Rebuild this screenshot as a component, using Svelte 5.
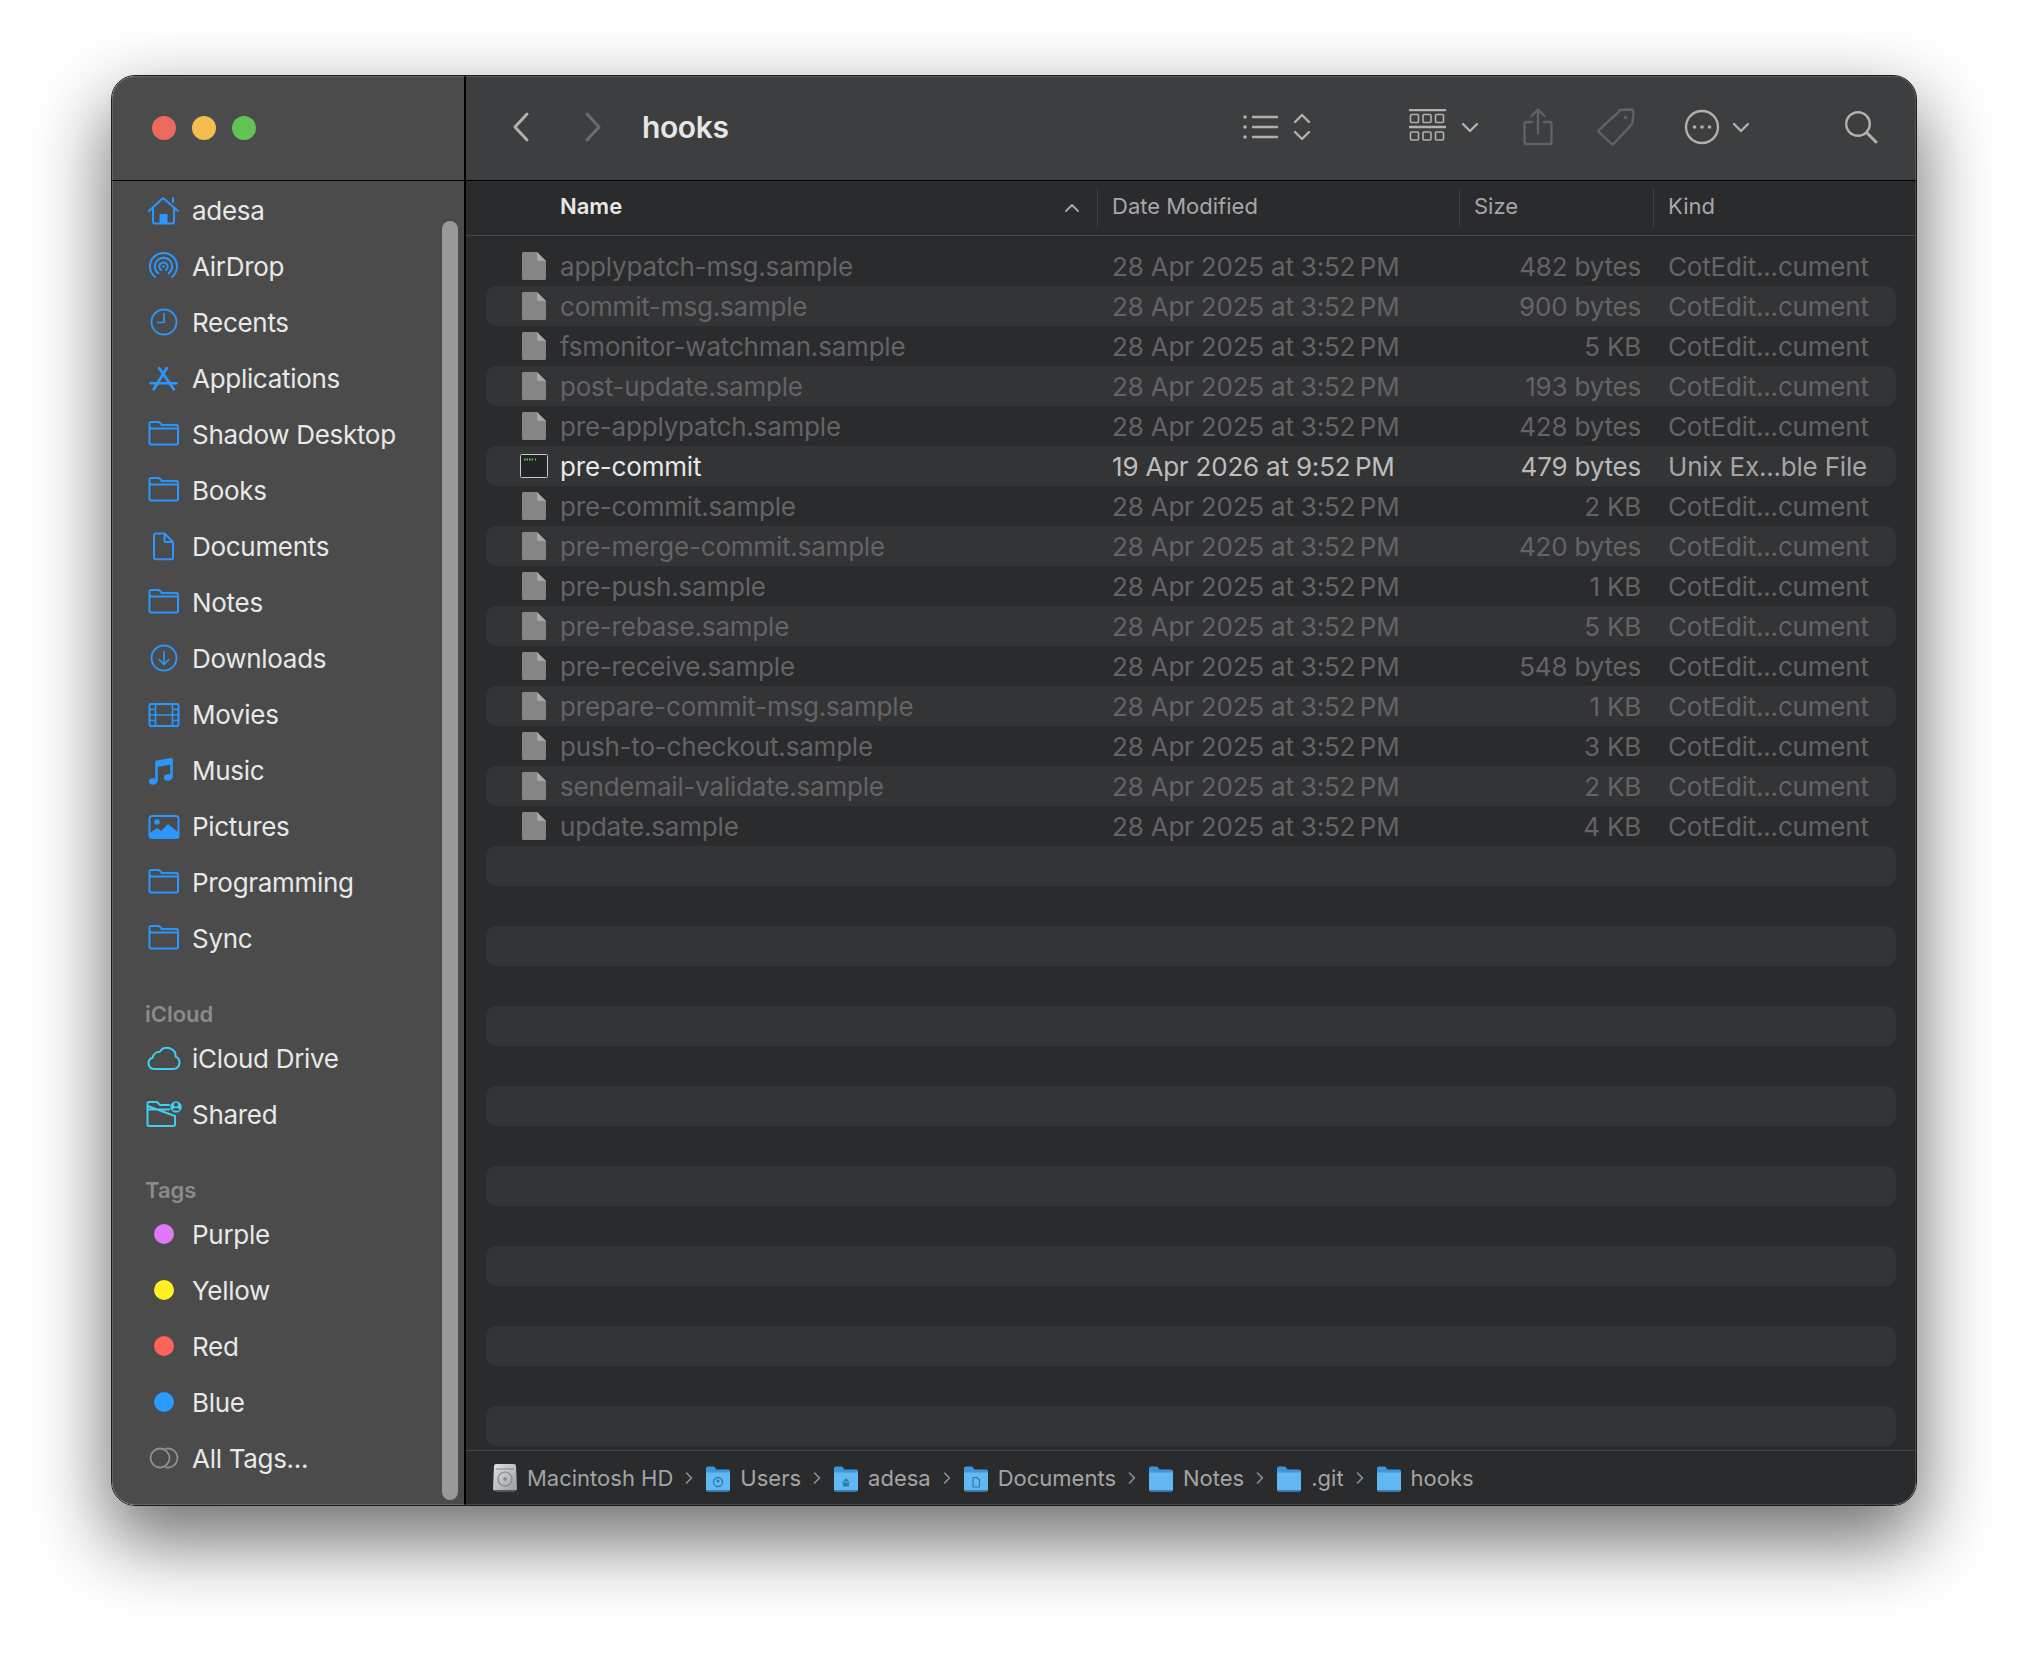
<script lang="ts">
	const date = '28 Apr 2025 at 3:52\u202fPM';
	const kind = 'CotEdit...cument';
	const files = [
		['applypatch-msg.sample', '482 bytes'],
		['commit-msg.sample', '900 bytes'],
		['fsmonitor-watchman.sample', '5 KB'],
		['post-update.sample', '193 bytes'],
		['pre-applypatch.sample', '428 bytes'],
		['pre-commit', '479 bytes'],
		['pre-commit.sample', '2 KB'],
		['pre-merge-commit.sample', '420 bytes'],
		['pre-push.sample', '1 KB'],
		['pre-rebase.sample', '5 KB'],
		['pre-receive.sample', '548 bytes'],
		['prepare-commit-msg.sample', '1 KB'],
		['push-to-checkout.sample', '3 KB'],
		['sendemail-validate.sample', '2 KB'],
		['update.sample', '4 KB']
	];
	const blanks = Array(15).fill(0);

	const places = [
		['adesa', 'home'],
		['AirDrop', 'airdrop'],
		['Recents', 'clock'],
		['Applications', 'apps'],
		['Shadow Desktop', 'folder'],
		['Books', 'folder'],
		['Documents', 'doc'],
		['Notes', 'folder'],
		['Downloads', 'download'],
		['Movies', 'film'],
		['Music', 'music'],
		['Pictures', 'picture'],
		['Programming', 'folder'],
		['Sync', 'folder']
	];
	const tags = [
		['Purple', '#de78f6'],
		['Yellow', '#fff01f'],
		['Red', '#ff6259'],
		['Blue', '#2a9bff']
	];
	const crumbs = [
		['Macintosh HD', 'hd'],
		['Users', 'users'],
		['adesa', 'home'],
		['Documents', 'docs'],
		['Notes', ''],
		['.git', ''],
		['hooks', '']
	];
</script>

{#snippet sideIcon(name)}
	<svg class="side-icon" viewBox="0 0 40 40" fill="none" stroke="currentColor" stroke-width="2" stroke-linecap="round" stroke-linejoin="round">
		{#if name === 'home'}
			<path d="M5 21 19 8l15 13M29 12V8M9 18v13.5a2 2 0 0 0 2 2h17a2 2 0 0 0 2-2V18" />
			<rect x="15.5" y="24" width="8" height="9" fill="currentColor" stroke="none" />
		{:else if name === 'airdrop'}
			<path d="M11.1 31A13.5 13.5 0 1 1 27.9 31M14.3 27.4A8.7 8.7 0 1 1 24.7 27.4M17 24A4.2 4.2 0 1 1 22 24" />
			<circle cx="19.5" cy="20.5" r="1.3" fill="currentColor" stroke="none" />
		{:else if name === 'clock'}
			<circle cx="20" cy="20" r="12.5" stroke-width="1.9" />
			<path d="M20 11.5V20.5H13.5" stroke-width="1.7" />
		{:else if name === 'apps'}
			<path d="M22.7 10.3 9.8 31.3M15.3 10.3 29.8 31.3" stroke-width="2.8" />
			<path d="M6.5 25.3H32.5" stroke-width="2.6" />
		{:else if name === 'folder'}
			<path d="M5.5 11v-1.5A1.5 1.5 0 0 1 7 8h8l3 3h14.5A1.5 1.5 0 0 1 34 12.5v16.5a1.5 1.5 0 0 1-1.5 1.5H7A1.5 1.5 0 0 1 5.5 29ZM5.5 14.5H34" />
		{:else if name === 'doc'}
			<path d="M12 7.5h8.5l8.5 8.5v15.5a1.7 1.7 0 0 1-1.7 1.7H11.7A1.7 1.7 0 0 1 10 31.5V9.5A2 2 0 0 1 12 7.5ZM20.5 7.5v6.7a1.8 1.8 0 0 0 1.8 1.8H29" />
		{:else if name === 'download'}
			<circle cx="20" cy="20" r="12.5" stroke-width="1.9" />
			<path d="M20 13.5V26M15 21.5l5 5 5-5" stroke-width="1.7" />
		{:else if name === 'film'}
			<rect x="5.5" y="10" width="29" height="22" rx="1.5" />
			<path d="M11.5 10V32M28.5 10V32M11.5 21H28.5M5.5 15.5h6M5.5 21h6M5.5 26.5h6M28.5 15.5h6M28.5 21h6M28.5 26.5h6" stroke-width="1.6" />
		{:else if name === 'music'}
			<path d="M12.5 31V12.5L27.5 10V27" stroke-width="2.6" />
			<path d="M12.5 11.5 27.5 9v4.5L12.5 16Z" fill="currentColor" />
			<ellipse cx="9" cy="31.5" rx="4" ry="3.3" fill="currentColor" stroke="none" />
			<ellipse cx="24" cy="27.5" rx="4" ry="3.3" fill="currentColor" stroke="none" />
		{:else if name === 'picture'}
			<rect x="5.5" y="10" width="29" height="22" rx="2.5" />
			<circle cx="13" cy="16" r="2.7" fill="currentColor" stroke="none" />
			<path d="M6 31v-4l7-5 4 3 7-7 10 8v5Z" fill="currentColor" stroke="none" />
		{:else if name === 'cloud'}
			<path d="M10 31a5.8 5.8 0 0 1-1.500-11.300 7.500 7.500 0 0 1 7.300-6 8.700 8.700 0 0 1 15.900 5 6.300 6.300 0 0 1 3.800 6 6.300 6.300 0 0 1-6.400 6.300Z" />
		{:else if name === 'shared'}
			<path d="M3.500 12v-2.500A1.500 1.500 0 0 1 5 8h8l3 3h9M31 22v8.500a1.500 1.500 0 0 1-1.500 1.500H5A1.500 1.500 0 0 1 3.500 30.500V12ZM3.500 15.500H25" />
			<circle cx="32" cy="13" r="5.800" fill="currentColor" stroke="none" />
			<circle cx="32" cy="10.800" r="2" fill="#4a4b4a" stroke="none" />
			<path d="M28.500 16.500a3.500 2.500 0 0 1 7 0Z" fill="#4a4b4a" stroke="none" />
		{:else if name === 'alltags'}
			<path d="M22 10.700a9.500 9.500 0 1 1 0 18.600" stroke-width="1.800" />
			<circle cx="16" cy="20" r="9.500" stroke-width="1.800" />
		{/if}
	</svg>
{/snippet}

{#snippet crumbIcon(badge)}
	{#if badge === 'hd'}
		<svg class="crumb-icon" viewBox="0 0 26 30">
			<defs>
				<linearGradient id="hdBody" x1="0" y1="0" x2="1" y2="1">
					<stop offset="0" stop-color="#dfe3e6" />
					<stop offset="1" stop-color="#9a9ea2" />
				</linearGradient>
			</defs>
			<path d="M4 1h18a2 2 0 0 1 2 2l1 23a1.500 1.500 0 0 1-1.500 1.500h-21A1.500 1.500 0 0 1 1 26L2 3a2 2 0 0 1 2-2Z" fill="url(#hdBody)" />
			<rect x="4" y="27" width="18" height="2" fill="#55585b" />
			<circle cx="13" cy="16" r="7" fill="none" stroke="#82868a" stroke-width="1.200" />
			<circle cx="13" cy="16" r="1.800" fill="#82868a" />
			<path d="M4 6h18" stroke="#82868a" stroke-width="1" />
		</svg>
	{:else}
		<svg class="crumb-icon" viewBox="0 0 26 30">
			<path d="M1 5.500A2 2 0 0 1 3 3.500h6l2.500 3H23A2 2 0 0 1 25 8.500V12H1Z" fill="#3f97d8" />
			<path d="M1 9.500h24v17a2 2 0 0 1-2 2H3a2 2 0 0 1-2-2Z" fill="#64b8f2" />
			<path d="M1 27h24v-.500a2 2 0 0 1-2 2H3a2 2 0 0 1-2-2Z" fill="#3a7eb4" />
			{#if badge === 'users'}
				<circle cx="13" cy="19" r="4.500" fill="none" stroke="#2f78b0" stroke-width="1.300" />
				<circle cx="13" cy="18" r="1.500" fill="#2f78b0" />
			{:else if badge === 'home'}
				<path d="M8.500 19.500 13 15l4.500 4.500M10 18.500V23.500h6V18.500" fill="#2f78b0" />
			{:else if badge === 'docs'}
				<path d="M10 14.500h4l2.500 2.500v7h-6.500Z" fill="none" stroke="#2f78b0" stroke-width="1.200" />
			{/if}
		</svg>
	{/if}
{/snippet}

<div class="page">
	<div class="window">
		<aside class="sidebar">
			<div class="lights">
				<span class="light red"></span>
				<span class="light yellow"></span>
				<span class="light green"></span>
			</div>
			<div class="side-scroll">
				<nav class="side-list">
					{#each places as [label, icon]}
						<div class="side-item">
							{@render sideIcon(icon)}
							<span>{label}</span>
						</div>
					{/each}
					<div class="side-head">iCloud</div>
					<div class="side-item cyan">
						{@render sideIcon('cloud')}
						<span>iCloud Drive</span>
					</div>
					<div class="side-item cyan">
						{@render sideIcon('shared')}
						<span>Shared</span>
					</div>
					<div class="side-head">Tags</div>
					{#each tags as [label, color]}
						<div class="side-item">
							<span class="tag-box"><i class="tag-dot" style="background: {color}"></i></span>
							<span>{label}</span>
						</div>
					{/each}
					<div class="side-item grey">
						{@render sideIcon('alltags')}
						<span>All Tags...</span>
					</div>
				</nav>
				<div class="scrollbar"></div>
			</div>
		</aside>

		<main class="main">
			<header class="toolbar">
				<svg class="tb back" viewBox="0 0 24 36"><path d="M18 5 6 18l12 13" /></svg>
				<svg class="tb forward" viewBox="0 0 24 36"><path d="M6 5l12 13L6 31" /></svg>
				<h1>hooks</h1>
				<svg class="tb list" viewBox="0 0 72 36">
					<path d="M10 8h24M10 18h24M10 28h24M52 13l7-7 7 7M52 23l7 7 7-7" />
					<circle cx="2" cy="8" r="1.800" class="solid" />
					<circle cx="2" cy="18" r="1.800" class="solid" />
					<circle cx="2" cy="28" r="1.800" class="solid" />
				</svg>
				<svg class="tb gallery" viewBox="0 0 72 36">
					<path d="M0 1h36M0 18h36" stroke-width="2.400" />
					<g class="thin">
						<rect x="1.500" y="5.500" width="8" height="8" rx="1" /><rect x="14" y="5.500" width="8" height="8" rx="1" /><rect x="26.500" y="5.500" width="8" height="8" rx="1" />
						<rect x="1.500" y="23" width="8" height="8" rx="1" /><rect x="14" y="23" width="8" height="8" rx="1" /><rect x="26.500" y="23" width="8" height="8" rx="1" />
					</g>
					<path d="M54 15l7 7 7-7" />
				</svg>
				<svg class="tb dim share" viewBox="0 0 30 38">
					<path d="M9 14H3.500A2 2 0 0 0 1.500 16v18a2 2 0 0 0 2 2h23a2 2 0 0 0 2-2V16a2 2 0 0 0-2-2H21M15 25V2M8.500 8 15 1.500 21.500 8" />
				</svg>
				<svg class="tb dim tagicon" viewBox="0 0 38 38">
					<path d="M22 3.500a2 2 0 0 1 1.500-1.500L34 1.500a2.500 2.500 0 0 1 2.500 2.700l-1 10.500a3 3 0 0 1-.8 1.700L17 35.500a2 2 0 0 1-2.800 0L2.500 24.500a2 2 0 0 1 0-2.800Z" />
					<circle cx="28.500" cy="9.500" r="1.800" class="solid" />
				</svg>
				<svg class="tb more" viewBox="0 0 66 36">
					<circle cx="18" cy="18" r="16" />
					<circle cx="10.500" cy="18" r="1.800" class="solid" />
					<circle cx="18" cy="18" r="1.800" class="solid" />
					<circle cx="25.500" cy="18" r="1.800" class="solid" />
					<path d="M50 15l7 7 7-7" />
				</svg>
				<svg class="tb search" viewBox="0 0 34 34">
					<circle cx="14" cy="14" r="11.800" />
					<path d="M23 23l9 9" stroke-width="3" />
				</svg>
			</header>

			<div class="head-row">
				<div class="col-name strong">Name
					<svg class="sort" viewBox="0 0 14 8"><path d="M1 7l6-6 6 6" /></svg>
				</div>
				<div class="col-date">Date Modified</div>
				<div class="col-size">Size</div>
				<div class="col-kind">Kind</div>
			</div>

			<div class="rows">
				{#each files as [name, size]}
					<div class="row" class:live={name === 'pre-commit'}>
						<div class="cell-icon">
							{#if name === 'pre-commit'}
								<svg class="exec" viewBox="0 0 28 24">
									<rect x=".5" y=".5" width="27" height="23" rx="1" fill="#232425" stroke="#c5c8ca" />
									<path d="M4 5.500h1.500M6.500 5.500H8M9 5.500h1.500M11.500 5.500H13M15 5.500h1" stroke="#62c554" stroke-width="2" />
								</svg>
							{:else}
								<svg class="file" viewBox="0 0 24 28">
									<path d="M1.500 0H15l9 9v17.500a1.500 1.500 0 0 1-1.500 1.500h-21A1.500 1.500 0 0 1 0 26.500v-25A1.500 1.500 0 0 1 1.500 0Z" fill="#858585" />
									<path d="M15 0l9 9h-7.500A1.500 1.500 0 0 1 15 7.500Z" fill="#a8a8a8" />
								</svg>
							{/if}
						</div>
						<div class="cell-name">{name}</div>
						<div class="cell-date">{name === 'pre-commit' ? '19 Apr 2026 at 9:52\u202fPM' : date}</div>
						<div class="cell-size">{size}</div>
						<div class="cell-kind">{name === 'pre-commit' ? 'Unix Ex...ble File' : kind}</div>
					</div>
				{/each}
				{#each blanks as _}
					<div class="row"></div>
				{/each}
			</div>

			<footer class="pathbar">
				{#each crumbs as [label, badge], i}
					<div class="crumb">
						{@render crumbIcon(badge)}
						<span>{label}</span>
					</div>
					{#if i < crumbs.length - 1}
						<svg class="crumb-sep" viewBox="0 0 8 14"><path d="M1.500 2 6.500 7l-5 5" /></svg>
					{/if}
				{/each}
			</footer>
		</main>
	</div>
</div>

<style>
	:global(body) {
		margin: 0;
		background: #fff;
	}

	.page {
		width: 2028px;
		height: 1654px;
		padding: 75px 0 0 111px;
		box-sizing: border-box;
		font-family: Inter, 'Noto Sans', sans-serif;
		overflow: hidden;
	}

	.window {
		position: relative;
		width: 1806px;
		height: 1431px;
		box-sizing: border-box;
		display: flex;
		border: 1px solid #1c1c1c;
		border-radius: 24px;
		overflow: hidden;
		box-shadow: 0 32px 74px 4px rgba(0, 0, 0, 0.56);
	}

	/* thin light edge inside the frame */
	.window::after {
		content: '';
		position: absolute;
		inset: 0;
		border-radius: 23px;
		border: 1px solid rgba(255, 255, 255, 0.14);
		pointer-events: none;
	}

	.sidebar {
		width: 352px;
		flex: none;
		display: flex;
		flex-direction: column;
		background: #4a4b4a;
		border-right: 2px solid #000;
	}

	.lights {
		flex: none;
		display: flex;
		align-items: center;
		gap: 16px;
		padding: 0 0 0 40px;
		box-sizing: border-box;
		border-bottom: 1px solid #000;
		height: 105px;
	}

	.light {
		width: 24px;
		height: 24px;
		border-radius: 50%;
	}
	.red { background: #ee6a5f; }
	.yellow { background: #f5bd4f; }
	.green { background: #61c454; }

	.side-scroll {
		flex: 1;
		display: flex;
		min-height: 0;
	}

	.side-list {
		flex: 1;
		padding-top: 1px;
	}

	.scrollbar {
		width: 16px;
		height: 1279px;
		margin: 40px 6px 0 0;
		border-radius: 8px;
		background: #979998;
	}

	.side-item {
		height: 56px;
		display: flex;
		align-items: center;
		gap: 8px;
		padding-left: 32px;
		font-size: 26px;
		letter-spacing: -0.3px;
		color: #e8e8e8;
	}

	.side-icon {
		width: 40px;
		height: 40px;
		flex: none;
		color: #2b96fb;
	}
	.cyan .side-icon { color: #3fcfef; }
	.grey .side-icon { color: #8f8f8f; }

	.tag-box {
		width: 40px;
		display: flex;
		justify-content: center;
		flex: none;
	}
	.tag-dot {
		width: 20px;
		height: 20px;
		border-radius: 50%;
	}

	.side-head {
		height: 32px;
		padding: 32px 0 0 33px;
		line-height: 32px;
		font-size: 22px;
		font-weight: 600;
		color: #8a8b8a;
	}

	.main {
		flex: 1;
		min-width: 0;
		display: flex;
		flex-direction: column;
		background: #2a2b2d;
	}

	.toolbar {
		height: 105px;
		flex: none;
		box-sizing: border-box;
		display: flex;
		align-items: center;
		background: #3d3e3f;
		border-bottom: 1px solid #000;
		padding-bottom: 3px;
	}

	.toolbar h1 {
		margin: 0 0 0 37px;
		width: 601px;
		font-size: 30px;
		font-weight: 600;
		letter-spacing: -0.4px;
		color: #e6e6e6;
	}

	.tb {
		flex: none;
		fill: none;
		stroke: #b0b0b0;
		stroke-width: 2.4;
		stroke-linecap: round;
		stroke-linejoin: round;
	}
	.tb .solid { fill: #b0b0b0; stroke: none; }
	.tb .thin { stroke-width: 1.6; }
	.tb.dim { stroke: #606162; }
	.tb.dim .solid { fill: #606162; }

	.back { width: 24px; height: 36px; margin-left: 43px; stroke-width: 3; }
	.forward { width: 24px; height: 36px; margin-left: 48px; stroke: #6a6b6c; stroke-width: 3; }
	.list { width: 72px; height: 36px; }
	.gallery { width: 72px; height: 36px; margin-left: 94px; }
	.share { width: 30px; height: 38px; margin-left: 42px; }
	.tagicon { width: 38px; height: 38px; margin-left: 44px; }
	.more { width: 66px; height: 36px; margin-left: 49px; }
	.search { width: 34px; height: 34px; margin-left: 94px; }

	.head-row {
		height: 54px;
		flex: none;
		display: flex;
		align-items: center;
		border-bottom: 1px solid #47484a;
		font-size: 22px;
		color: #a6a7a8;
	}

	.head-row > div {
		height: 38px;
		line-height: 35px;
		box-sizing: border-box;
	}

	.col-name {
		width: 632px;
		padding-left: 94px;
		border-right: 1px solid #404143;
		display: flex;
		justify-content: space-between;
		align-items: flex-start;
		padding-right: 18px;
	}
	.strong {
		font-weight: 600;
		color: #e8e8e8;
	}
	.sort {
		width: 14px;
		height: 8px;
		align-self: center;
		fill: none;
		stroke: #a6a7a8;
		stroke-width: 1.8;
		stroke-linecap: round;
		stroke-linejoin: round;
	}
	.col-date {
		width: 362px;
		padding-left: 14px;
		border-right: 1px solid #404143;
	}
	.col-size {
		width: 194px;
		padding-left: 14px;
		border-right: 1px solid #404143;
	}
	.col-kind {
		padding-left: 14px;
	}

	.rows {
		flex: 1;
		min-height: 0;
		overflow: hidden;
		padding: 10px 20px 0;
	}

	.row {
		height: 40px;
		display: flex;
		align-items: center;
		font-size: 26px;
		letter-spacing: -0.2px;
		color: #636466;
		border-radius: 10px;
		white-space: nowrap;
	}
	.row:nth-child(even) {
		background: #333436;
	}
	.row.live {
		color: #e8e8e8;
	}

	.cell-icon {
		width: 74px;
		padding-left: 34px;
		box-sizing: border-box;
		display: flex;
		align-items: center;
	}
	.file { width: 24px; height: 28px; margin-left: 2px; }
	.exec { width: 28px; height: 24px; }
	.cell-name { width: 552px; }
	.cell-date { width: 281px; }
	.cell-size { width: 248px; text-align: right; }
	.cell-kind { margin-left: 27px; }
	.live .cell-date { color: #bdbdbd; }
	.live .cell-size { color: #b8b8b8; }
	.live .cell-kind { color: #a5a5a5; }

	.pathbar {
		height: 54px;
		flex: none;
		display: flex;
		align-items: center;
		gap: 12px;
		padding-left: 26px;
		border-top: 1px solid #444547;
		font-size: 22px;
		color: #a3a4a5;
	}
	.crumb {
		display: flex;
		align-items: center;
		gap: 9px;
	}
	.crumb-icon {
		width: 26px;
		height: 30px;
		flex: none;
	}
	.crumb-sep {
		width: 8px;
		height: 14px;
		flex: none;
		fill: none;
		stroke: #8f9091;
		stroke-width: 1.6;
		stroke-linecap: round;
		stroke-linejoin: round;
	}
</style>
